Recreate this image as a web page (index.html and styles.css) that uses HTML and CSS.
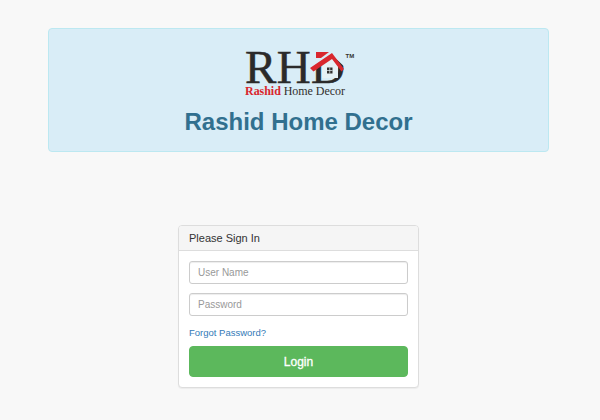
FILE: index.html
```html
<!DOCTYPE html>
<html>
<head>
    <meta charset="utf-8" />
    <title>Rashid Home Decor</title>
    <link rel="stylesheet" href="styles.css">
</head>
<body>
    <div class="banner">
        <svg class="logo" width="112" height="62" viewBox="0 -12 112 62">
            <text class="logo-rhd" x="0" y="32" textLength="100">RHD</text>
            <!-- clear the top of the D, then house and roof over it -->
            <path d="M65.500 -2 H104 V20 L87 4 L65.500 17 Z" fill="#d9edf7" />
            <path d="M77 15 L87 8 L93 13 V27 H77 Z" fill="#e6f1f5" />
            <path d="M65 17 L87 2 L99 18 L96.500 20.500 L87 8 L68.500 20.500 Z" fill="#d9272e" />
            <path d="M71 1 H84 L76 7 H71 Z" fill="#d9272e" />
            <path d="M82 16.500 h5.500 v6 h-5.500 Z" fill="#33302e" />
            <path d="M84.750 16.500 v6 M82 19.500 h5.500" stroke="#e6f1f5" stroke-width="0.700" />
            <text class="logo-tm" x="100.500" y="7">TM</text>
            <text class="logo-sub" x="0" y="44" textLength="100"><tspan class="logo-red">Rashid</tspan> Home Decor</text>
        </svg>
        <h1 class="banner-title">Rashid Home Decor</h1>
    </div>

    <form class="panel" action="#" method="get">
        <div class="panel-head">Please Sign In</div>
        <div class="panel-body">
            <input class="field" type="text" placeholder="User Name" />
            <input class="field" type="password" placeholder="Password" />
            <a class="forgot" href="#">Forgot Password?</a>
            <button class="login" type="button">Login</button>
        </div>
    </form>
</body>
</html>
```

FILE: styles.css
```css
* {
    box-sizing: border-box;
    font-family: "Liberation Sans", Arial, sans-serif;
}

body {
    margin: 0;
    height: 420px;
    overflow: hidden;
    background: #f8f8f8;
    padding: 28px 0 0 48px;
}

.banner {
    width: 501px;
    height: 124px;
    background: #d9edf7;
    border: 1px solid #bce8f1;
    border-radius: 4px;
    display: flex;
    flex-direction: column;
    align-items: center;
    padding-top: 10px;
}

.logo {
    display: block;
    margin-left: 5px;
}

.logo-rhd {
    font-family: "Liberation Serif", serif;
    font-size: 47px;
    fill: #2b2a2a;
    stroke: #2b2a2a;
    stroke-width: .5px;
}

.logo-tm {
    font-size: 6px;
    font-weight: bold;
    fill: #33302e;
}

.logo-sub {
    font-family: "Liberation Serif", serif;
    font-size: 12px;
    fill: #33302e;
}

.logo-red {
    font-family: "Liberation Serif", serif;
    font-weight: bold;
    fill: #d9272e;
}

.banner-title {
    margin: 8px 0 0;
    font-size: 24px;
    line-height: 26px;
    font-weight: bold;
    color: #31708f;
}

.panel {
    width: 241px;
    height: 163px;
    margin: 73px 0 0 130px;
    background: #fff;
    border: 1px solid #ddd;
    border-radius: 4px;
    box-shadow: 0 1px 1px rgba(0, 0, 0, .05);
}

.panel-head {
    height: 25px;
    padding: 0 10px;
    background: #f5f5f5;
    border-bottom: 1px solid #ddd;
    border-radius: 3px 3px 0 0;
    font-size: 11px;
    line-height: 24px;
    color: #333;
}

.panel-body {
    display: flex;
    flex-direction: column;
    padding: 10px;
}

.field {
    width: 219px;
    height: 23px;
    margin-bottom: 9px;
    padding: 0 8px;
    background: #fff;
    border: 1px solid #ccc;
    border-radius: 3px;
    box-shadow: inset 0 1px 1px rgba(0, 0, 0, .075);
    font-size: 10px;
    color: #555;
}

.field::placeholder {
    color: #999;
    opacity: 1;
}

.forgot {
    align-self: flex-start;
    font-size: 9.500px;
    line-height: 16px;
    color: #337ab7;
    text-decoration: none;
}

.login {
    width: 219px;
    height: 31px;
    margin-top: 5px;
    background: #5cb85c;
    border: 1px solid #5cb85c;
    border-radius: 4px;
    color: #fff;
    font-size: 12px;
    -webkit-text-stroke: .3px #fff;
}
```
